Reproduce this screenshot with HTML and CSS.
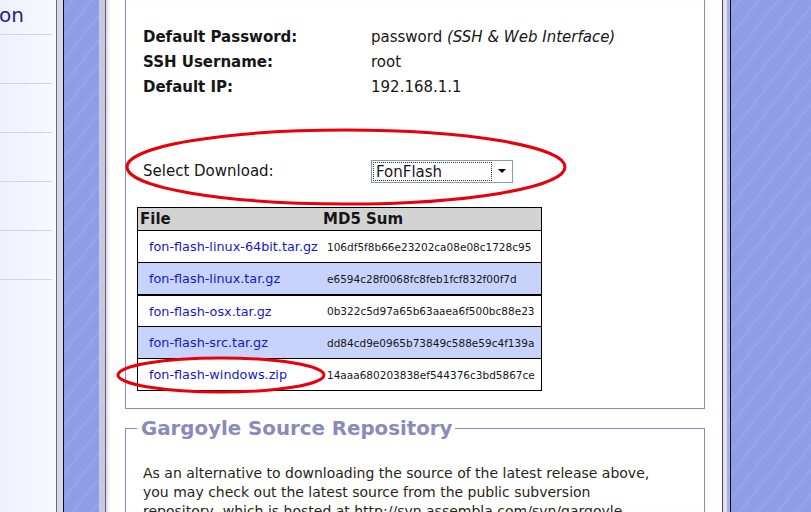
FILE: index.html
```html
<!DOCTYPE html>
<html lang="en">
<head>
    <meta charset="UTF-8">
    <title>Gargoyle Downloads</title>
    <link rel="stylesheet" href="styles.css">
</head>
<body>
    <div class="page">
        <nav class="sidebar">
            <div class="nav-title">on</div>
            <div class="nav-item"></div>
            <div class="nav-item"></div>
            <div class="nav-item"></div>
            <div class="nav-item"></div>
            <div class="nav-item"></div>
        </nav>
        <div class="gutter"></div>
        <div class="stripe stripe-left"></div>
        <div class="frame-left"></div>

        <main class="content">
            <fieldset class="box box-download">
                <div class="info">
                    <span class="info-label">Default Password:</span>
                    <span>password <em>(SSH &amp; Web Interface)</em></span>
                    <span class="info-label">SSH Username:</span>
                    <span>root</span>
                    <span class="info-label">Default IP:</span>
                    <span>192.168.1.1</span>
                </div>

                <div class="select-row">
                    <span class="select-label">Select Download:</span>
                    <div class="select">
                        <span class="select-value">FonFlash</span>
                        <span class="select-arrow"></span>
                    </div>
                </div>

                <table class="files">
                    <tr><th class="col-file">File</th><th>MD5 Sum</th></tr>
                    <tr><td><a href="#">fon-flash-linux-64bit.tar.gz</a></td><td class="md5">106df5f8b66e23202ca08e08c1728c95</td></tr>
                    <tr class="alt"><td><a href="#">fon-flash-linux.tar.gz</a></td><td class="md5">e6594c28f0068fc8feb1fcf832f00f7d</td></tr>
                    <tr class="split"><td><a href="#">fon-flash-osx.tar.gz</a></td><td class="md5">0b322c5d97a65b63aaea6f500bc88e23</td></tr>
                    <tr class="alt"><td><a href="#">fon-flash-src.tar.gz</a></td><td class="md5">dd84cd9e0965b73849c588e59c4f139a</td></tr>
                    <tr><td><a href="#">fon-flash-windows.zip</a></td><td class="md5">14aaa680203838ef544376c3bd5867ce</td></tr>
                </table>

                <!-- red marks drawn over the page -->
                <svg class="marks" width="620" height="420" viewBox="0 0 620 420">
                    <ellipse cx="240" cy="176" rx="219" ry="37" fill="none" stroke="#e8000a" stroke-width="3"/>
                    <ellipse cx="115" cy="384" rx="103" ry="17" fill="none" stroke="#e8000a" stroke-width="3"/>
                </svg>
            </fieldset>

            <fieldset class="box box-source">
                <legend>Gargoyle Source Repository</legend>
                <p>As an alternative to downloading the source of the latest release above,
                you may check out the latest source from the public subversion
                repository, which is hosted at http://svn.assembla.com/svn/gargoyle</p>
            </fieldset>
        </main>

        <div class="frame-right"></div>
        <div class="stripe stripe-right"></div>
    </div>
</body>
</html>
```

FILE: styles.css
```css
body {
    margin: 0;
    font-family: "DejaVu Sans", Verdana, sans-serif;
    color: #161616;
    overflow: hidden;
}
.page {
    display: flex;
    height: 512px;
    overflow: hidden;
}
.sidebar {
    width: 56px;
    flex: none;
    background: linear-gradient(to right, #eef1fc, #f9f9ff);
    border-right: 1px solid #6c6c76;
}
.nav-title {
    height: 34px;
    font-size: 20px;
    line-height: 30px;
    color: #1e1e8c;
    border-bottom: 1px solid #d4d4dc;
    margin-right: 4px;
    text-indent: -1px;
}
.nav-item {
    height: 48px;
    border-bottom: 1px solid #d4d4dc;
    margin-right: 4px;
}
.gutter {
    width: 6px;
    flex: none;
    background: #d8d8e8;
    border-right: 1px solid #111;
}
.stripe {
    background-color: #8e9fe8;
    background-image: repeating-linear-gradient(128deg, rgba(255,255,255,0) 0 6px, rgba(255,255,255,0.07) 6px 8px, rgba(255,255,255,0) 8px 13px, rgba(60,70,160,0.03) 13px 15px);
}
.stripe-left {
    width: 35px;
    flex: none;
}
.stripe-right {
    flex: 1;
    border-left: 1px solid #111;
}
.frame-left {
    width: 8px;
    flex: none;
    background: linear-gradient(to right, #c4cbf0 0 1px, #c9c9de 1px 6px, #5e5e6c 6px 7px, #dcdce6 7px);
}
.frame-right {
    width: 8px;
    flex: none;
    background: linear-gradient(to right, #4a4a52 0 1px, #e2e2ea 1px 5px, #a9b1e4 5px);
}
.content {
    width: 615px;
    flex: none;
    background: #fff;
    box-shadow: inset 3px 0 3px -2px rgba(80, 80, 110, 0.25);
}
.box {
    position: relative;
    margin: 0 17px 0 18px;
    border: 1px solid #8a8ac2;
    padding: 0 17px;
}
.box-download {
    margin-top: -10px;
    padding-top: 34px;
    padding-bottom: 17px;
}
.info {
    display: grid;
    grid-template-columns: 228px 1fr;
    font-size: 15px;
    line-height: 25px;
}
.info-label {
    font-weight: bold;
}
.info em {
    font-style: italic;
}
.select-row {
    display: flex;
    align-items: center;
    margin-top: 59px;
    height: 24px;
    font-size: 15px;
}
.select-label {
    width: 228px;
}
.select {
    display: flex;
    align-items: center;
    width: 140px;
    height: 21px;
    border: 1px solid #7f9db9;
    background: #fff;
}
.select-value {
    width: 119px;
    height: 19px;
    margin-left: 1px;
    outline: 1px dotted #333;
    outline-offset: -1px;
    padding-left: 3px;
    box-sizing: border-box;
    line-height: 20px;
    font-size: 15px;
}
.select-arrow {
    width: 0;
    height: 0;
    margin-left: 6px;
    border-left: 4px solid transparent;
    border-right: 4px solid transparent;
    border-top: 4px solid #000;
}
.files {
    margin: 24px 0 0 -6px;
    width: 405px;
    border-collapse: collapse;
    border: 1px solid #000;
}
.files th {
    background: #d3d3d3;
    text-align: left;
    font-size: 15px;
    height: 22px;
    padding: 0 0 0 2px;
    border-bottom: 1px solid #000;
}
.files th.col-file {
    width: 181px;
}
.files td {
    height: 31px;
    padding: 0 0 0 11px;
    border-bottom: 1px solid #000;
    font-size: 12.8px;
}
.files td.md5 {
    padding-left: 6px;
    font-size: 10.5px;
}
.files tr.alt td {
    background: #c7d3fa;
}
.files tr.split td {
    border-top: 2px solid #000;
    height: 30px;
}
.files a {
    color: #1717c8;
    text-decoration: none;
}
.marks {
    position: absolute;
    left: -20px;
    top: 0;
    overflow: visible;
    pointer-events: none;
}
.box-source {
    margin-top: 8px;
    padding-bottom: 20px;
}
.box-source legend {
    margin-left: -6px;
    padding: 0 3px 0 4px;
    font-size: 19.8px;
    font-weight: bold;
    color: #8a8abc;
    line-height: 23px;
}
.box-source p {
    margin: 24px 24px 0 0;
    font-size: 14px;
    line-height: 19px;
    color: #2a2418;
}
```
